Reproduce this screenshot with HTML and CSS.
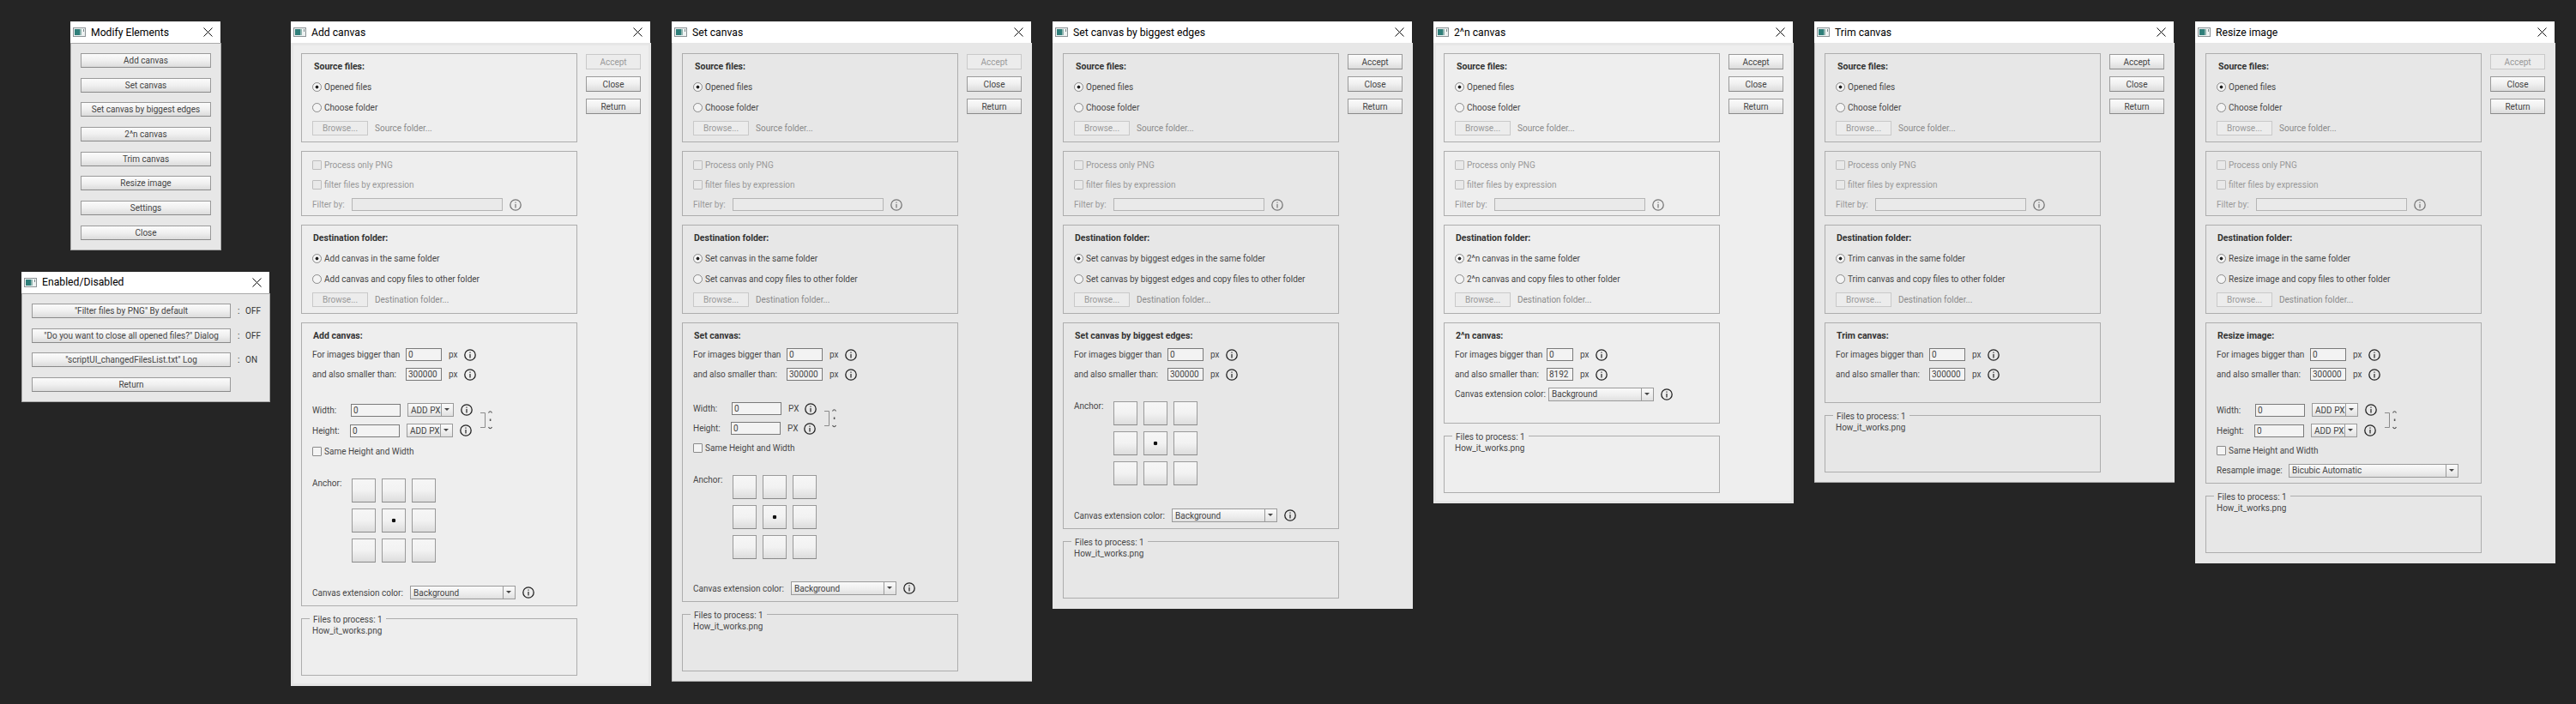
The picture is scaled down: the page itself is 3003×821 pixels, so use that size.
FILE: index.html
```html
<!DOCTYPE html>
<html lang="en">
<head>
    <meta charset="UTF-8">
    <title>Modify Elements</title>
    <link rel="stylesheet" href="styles.css">
</head>
<body>

    <svg class="defs" width="0" height="0">
        <symbol id="app" viewBox="0 0 15 11">
            <rect x="0.5" y="0.5" width="14" height="10" fill="#eef2f2" stroke="#8c9396"/>
            <rect x="2" y="2" width="6" height="7" fill="#2f7f7a"/>
            <rect x="8" y="2" width="2" height="7" fill="#8fb5b0"/>
            <rect x="12" y="2" width="1" height="3" fill="#7c8a8c"/>
        </symbol>
        <symbol id="x" viewBox="0 0 11 11">
            <path d="M0.5 0.5L10.5 10.5M10.5 0.5L0.5 10.5" stroke="#111" fill="none"/>
        </symbol>
        <symbol id="info" viewBox="0 0 14 14">
            <circle cx="7" cy="7" r="6.2" fill="none" stroke="currentColor" stroke-width="1.3"/>
            <path d="M7 3.4V4.8M7 6V10.4" stroke="currentColor" stroke-width="1.2"/>
        </symbol>
        <symbol id="link" viewBox="0 0 17 24">
            <path d="M0 3.5H5.5V20.5H0" fill="none" stroke="#8a8a8a"/>
            <path d="M9.5 3.5Q11.5 0 13.5 3.5M9.5 20Q11.5 23.5 13.5 20" fill="none" stroke="#555" stroke-width="1.2"/>
            <rect x="10.8" y="10.5" width="1.6" height="2.5" fill="#555"/>
        </symbol>
    </svg>

    <main class="desktop">

        <div class="stack">
            <section class="win win-menu edged">
                <header class="title"><svg class="app"><use href="#app"/></svg><span>Modify Elements</span><svg class="close"><use href="#x"/></svg></header>
                <div class="menu">
                    <button>Add canvas</button>
                    <button>Set canvas</button>
                    <button>Set canvas by biggest edges</button>
                    <button>2^n canvas</button>
                    <button>Trim canvas</button>
                    <button>Resize image</button>
                    <button>Settings</button>
                    <button>Close</button>
                </div>
            </section>

            <section class="win win-toggles edged">
                <header class="title"><svg class="app"><use href="#app"/></svg><span>Enabled/Disabled</span><svg class="close"><use href="#x"/></svg></header>
                <div class="toggles">
                    <button>"Filter files by PNG" By default</button><span class="state"><b>:</b>OFF</span>
                    <button>"Do you want to close all opened files?" Dialog</button><span class="state"><b>:</b>OFF</span>
                    <button>"scriptUI_changedFilesList.txt" Log</button><span class="state"><b>:</b>ON</span>
                    <button>Return</button>
                </div>
            </section>
        </div>

        <!-- Add canvas -->
        <section class="win light">
            <header class="title"><svg class="app"><use href="#app"/></svg><span>Add canvas</span><svg class="close"><use href="#x"/></svg></header>
            <div class="body">
                <div class="main">
                    <div class="panel">
                        <h3 class="source-head">Source files:</h3>
                        <label class="pick"><input type="radio" name="src1" checked>Opened files</label>
                        <label class="pick"><input type="radio" name="src1">Choose folder</label>
                        <div class="browse"><button disabled>Browse...</button><span>Source folder...</span></div>
                    </div>
                    <div class="panel filter">
                        <label class="row off"><input type="checkbox" disabled>Process only PNG</label>
                        <label class="row off"><input type="checkbox" disabled>filter files by expression</label>
                        <div class="row off"><span class="w-filter">Filter by:</span><input class="in-filter" type="text" disabled><svg class="info"><use href="#info"/></svg></div>
                    </div>
                    <div class="panel">
                        <h3>Destination folder:</h3>
                        <label class="pick"><input type="radio" name="dst1" checked>Add canvas in the same folder</label>
                        <label class="pick"><input type="radio" name="dst1">Add canvas and copy files to other folder</label>
                        <div class="browse"><button disabled>Browse...</button><span>Destination folder...</span></div>
                    </div>
                    <div class="panel opts">
                        <h3>Add canvas:</h3>
                        <div class="row"><span class="w-size">For images bigger than</span><input class="in-size" type="text" value="0"><span class="px">px</span><svg class="info"><use href="#info"/></svg></div>
                        <div class="row"><span class="w-size">and also smaller than:</span><input class="in-size" type="text" value="300000"><span class="px">px</span><svg class="info"><use href="#info"/></svg></div>
                        <div class="dims tall">
                            <div>
                                <div class="row"><span class="w-width">Width:</span><input class="in-dim" type="text" value="0"><div class="select sel-unit"><span>ADD PX</span><i></i></div><svg class="info"><use href="#info"/></svg></div>
                                <div class="row"><span class="w-height">Height:</span><input class="in-dim" type="text" value="0"><div class="select sel-unit"><span>ADD PX</span><i></i></div><svg class="info"><use href="#info"/></svg></div>
                            </div>
                            <svg class="link"><use href="#link"/></svg>
                        </div>
                        <label class="row tall"><input type="checkbox">Same Height and Width</label>
                        <div class="anchor">
                            <span>Anchor:</span>
                            <div class="anchor-grid"><button></button><button></button><button></button><button></button><button class="dot"></button><button></button><button></button><button></button><button></button></div>
                        </div>
                        <div class="row tall color"><span class="w-color">Canvas extension color:</span><div class="select sel-color"><span>Background</span><i></i></div><svg class="info"><use href="#info"/></svg></div>
                    </div>
                    <fieldset class="files"><legend>Files to process: 1</legend><p>How_it_works.png</p></fieldset>
                </div>
                <div class="actions"><button disabled>Accept</button><button>Close</button><button>Return</button></div>
            </div>
        </section>

        <!-- Set canvas -->
        <section class="win edged">
            <header class="title"><svg class="app"><use href="#app"/></svg><span>Set canvas</span><svg class="close"><use href="#x"/></svg></header>
            <div class="body">
                <div class="main">
                    <div class="panel">
                        <h3 class="source-head">Source files:</h3>
                        <label class="pick"><input type="radio" name="src2" checked>Opened files</label>
                        <label class="pick"><input type="radio" name="src2">Choose folder</label>
                        <div class="browse"><button disabled>Browse...</button><span>Source folder...</span></div>
                    </div>
                    <div class="panel filter">
                        <label class="row off"><input type="checkbox" disabled>Process only PNG</label>
                        <label class="row off"><input type="checkbox" disabled>filter files by expression</label>
                        <div class="row off"><span class="w-filter">Filter by:</span><input class="in-filter" type="text" disabled><svg class="info"><use href="#info"/></svg></div>
                    </div>
                    <div class="panel">
                        <h3>Destination folder:</h3>
                        <label class="pick"><input type="radio" name="dst2" checked>Set canvas in the same folder</label>
                        <label class="pick"><input type="radio" name="dst2">Set canvas and copy files to other folder</label>
                        <div class="browse"><button disabled>Browse...</button><span>Destination folder...</span></div>
                    </div>
                    <div class="panel opts opts-set">
                        <h3>Set canvas:</h3>
                        <div class="row"><span class="w-size">For images bigger than</span><input class="in-size" type="text" value="0"><span class="px">px</span><svg class="info"><use href="#info"/></svg></div>
                        <div class="row"><span class="w-size">and also smaller than:</span><input class="in-size" type="text" value="300000"><span class="px">px</span><svg class="info"><use href="#info"/></svg></div>
                        <div class="dims">
                            <div>
                                <div class="row"><span class="w-width">Width:</span><input class="in-dim" type="text" value="0"><span class="px px-upper">PX</span><svg class="info"><use href="#info"/></svg></div>
                                <div class="row"><span class="w-height">Height:</span><input class="in-dim" type="text" value="0"><span class="px px-upper">PX</span><svg class="info"><use href="#info"/></svg></div>
                            </div>
                            <svg class="link"><use href="#link"/></svg>
                        </div>
                        <label class="row"><input type="checkbox">Same Height and Width</label>
                        <div class="anchor">
                            <span>Anchor:</span>
                            <div class="anchor-grid"><button></button><button></button><button></button><button></button><button class="dot"></button><button></button><button></button><button></button><button></button></div>
                        </div>
                        <div class="row tall color"><span class="w-color">Canvas extension color:</span><div class="select sel-color"><span>Background</span><i></i></div><svg class="info"><use href="#info"/></svg></div>
                    </div>
                    <fieldset class="files"><legend>Files to process: 1</legend><p>How_it_works.png</p></fieldset>
                </div>
                <div class="actions"><button disabled>Accept</button><button>Close</button><button>Return</button></div>
            </div>
        </section>

        <!-- Set canvas by biggest edges -->
        <section class="win">
            <header class="title"><svg class="app"><use href="#app"/></svg><span>Set canvas by biggest edges</span><svg class="close"><use href="#x"/></svg></header>
            <div class="body">
                <div class="main">
                    <div class="panel">
                        <h3 class="source-head">Source files:</h3>
                        <label class="pick"><input type="radio" name="src3" checked>Opened files</label>
                        <label class="pick"><input type="radio" name="src3">Choose folder</label>
                        <div class="browse"><button disabled>Browse...</button><span>Source folder...</span></div>
                    </div>
                    <div class="panel filter">
                        <label class="row off"><input type="checkbox" disabled>Process only PNG</label>
                        <label class="row off"><input type="checkbox" disabled>filter files by expression</label>
                        <div class="row off"><span class="w-filter">Filter by:</span><input class="in-filter" type="text" disabled><svg class="info"><use href="#info"/></svg></div>
                    </div>
                    <div class="panel">
                        <h3>Destination folder:</h3>
                        <label class="pick"><input type="radio" name="dst3" checked>Set canvas by biggest edges in the same folder</label>
                        <label class="pick"><input type="radio" name="dst3">Set canvas by biggest edges and copy files to other folder</label>
                        <div class="browse"><button disabled>Browse...</button><span>Destination folder...</span></div>
                    </div>
                    <div class="panel opts">
                        <h3>Set canvas by biggest edges:</h3>
                        <div class="row"><span class="w-size">For images bigger than</span><input class="in-size" type="text" value="0"><span class="px">px</span><svg class="info"><use href="#info"/></svg></div>
                        <div class="row"><span class="w-size">and also smaller than:</span><input class="in-size" type="text" value="300000"><span class="px">px</span><svg class="info"><use href="#info"/></svg></div>
                        <div class="anchor">
                            <span>Anchor:</span>
                            <div class="anchor-grid"><button></button><button></button><button></button><button></button><button class="dot"></button><button></button><button></button><button></button><button></button></div>
                        </div>
                        <div class="row tall color"><span class="w-color">Canvas extension color:</span><div class="select sel-color"><span>Background</span><i></i></div><svg class="info"><use href="#info"/></svg></div>
                    </div>
                    <fieldset class="files"><legend>Files to process: 1</legend><p>How_it_works.png</p></fieldset>
                </div>
                <div class="actions"><button>Accept</button><button>Close</button><button>Return</button></div>
            </div>
        </section>

        <!-- 2^n canvas -->
        <section class="win light">
            <header class="title"><svg class="app"><use href="#app"/></svg><span>2^n canvas</span><svg class="close"><use href="#x"/></svg></header>
            <div class="body">
                <div class="main">
                    <div class="panel">
                        <h3 class="source-head">Source files:</h3>
                        <label class="pick"><input type="radio" name="src4" checked>Opened files</label>
                        <label class="pick"><input type="radio" name="src4">Choose folder</label>
                        <div class="browse"><button disabled>Browse...</button><span>Source folder...</span></div>
                    </div>
                    <div class="panel filter">
                        <label class="row off"><input type="checkbox" disabled>Process only PNG</label>
                        <label class="row off"><input type="checkbox" disabled>filter files by expression</label>
                        <div class="row off"><span class="w-filter">Filter by:</span><input class="in-filter" type="text" disabled><svg class="info"><use href="#info"/></svg></div>
                    </div>
                    <div class="panel">
                        <h3>Destination folder:</h3>
                        <label class="pick"><input type="radio" name="dst4" checked>2^n canvas in the same folder</label>
                        <label class="pick"><input type="radio" name="dst4">2^n canvas and copy files to other folder</label>
                        <div class="browse"><button disabled>Browse...</button><span>Destination folder...</span></div>
                    </div>
                    <div class="panel opts opts-pow">
                        <h3>2^n canvas:</h3>
                        <div class="row"><span class="w-pow">For images bigger than</span><input class="in-pow" type="text" value="0"><span class="px">px</span><svg class="info"><use href="#info"/></svg></div>
                        <div class="row"><span class="w-pow">and also smaller than:</span><input class="in-pow" type="text" value="8192"><span class="px">px</span><svg class="info"><use href="#info"/></svg></div>
                        <div class="row"><span class="w-color w-color-pow">Canvas extension color:</span><div class="select sel-color"><span>Background</span><i></i></div><svg class="info"><use href="#info"/></svg></div>
                    </div>
                    <fieldset class="files"><legend>Files to process: 1</legend><p>How_it_works.png</p></fieldset>
                </div>
                <div class="actions"><button>Accept</button><button>Close</button><button>Return</button></div>
            </div>
        </section>

        <!-- Trim canvas -->
        <section class="win edged">
            <header class="title"><svg class="app"><use href="#app"/></svg><span>Trim canvas</span><svg class="close"><use href="#x"/></svg></header>
            <div class="body">
                <div class="main">
                    <div class="panel">
                        <h3 class="source-head">Source files:</h3>
                        <label class="pick"><input type="radio" name="src5" checked>Opened files</label>
                        <label class="pick"><input type="radio" name="src5">Choose folder</label>
                        <div class="browse"><button disabled>Browse...</button><span>Source folder...</span></div>
                    </div>
                    <div class="panel filter">
                        <label class="row off"><input type="checkbox" disabled>Process only PNG</label>
                        <label class="row off"><input type="checkbox" disabled>filter files by expression</label>
                        <div class="row off"><span class="w-filter">Filter by:</span><input class="in-filter" type="text" disabled><svg class="info"><use href="#info"/></svg></div>
                    </div>
                    <div class="panel">
                        <h3>Destination folder:</h3>
                        <label class="pick"><input type="radio" name="dst5" checked>Trim canvas in the same folder</label>
                        <label class="pick"><input type="radio" name="dst5">Trim canvas and copy files to other folder</label>
                        <div class="browse"><button disabled>Browse...</button><span>Destination folder...</span></div>
                    </div>
                    <div class="panel opts opts-trim">
                        <h3>Trim canvas:</h3>
                        <div class="row"><span class="w-size">For images bigger than</span><input class="in-size" type="text" value="0"><span class="px">px</span><svg class="info"><use href="#info"/></svg></div>
                        <div class="row"><span class="w-size">and also smaller than:</span><input class="in-size" type="text" value="300000"><span class="px">px</span><svg class="info"><use href="#info"/></svg></div>
                    </div>
                    <fieldset class="files"><legend>Files to process: 1</legend><p>How_it_works.png</p></fieldset>
                </div>
                <div class="actions"><button>Accept</button><button>Close</button><button>Return</button></div>
            </div>
        </section>

        <!-- Resize image -->
        <section class="win">
            <header class="title"><svg class="app"><use href="#app"/></svg><span>Resize image</span><svg class="close"><use href="#x"/></svg></header>
            <div class="body">
                <div class="main">
                    <div class="panel">
                        <h3 class="source-head">Source files:</h3>
                        <label class="pick"><input type="radio" name="src6" checked>Opened files</label>
                        <label class="pick"><input type="radio" name="src6">Choose folder</label>
                        <div class="browse"><button disabled>Browse...</button><span>Source folder...</span></div>
                    </div>
                    <div class="panel filter">
                        <label class="row off"><input type="checkbox" disabled>Process only PNG</label>
                        <label class="row off"><input type="checkbox" disabled>filter files by expression</label>
                        <div class="row off"><span class="w-filter">Filter by:</span><input class="in-filter" type="text" disabled><svg class="info"><use href="#info"/></svg></div>
                    </div>
                    <div class="panel">
                        <h3>Destination folder:</h3>
                        <label class="pick"><input type="radio" name="dst6" checked>Resize image in the same folder</label>
                        <label class="pick"><input type="radio" name="dst6">Resize image and copy files to other folder</label>
                        <div class="browse"><button disabled>Browse...</button><span>Destination folder...</span></div>
                    </div>
                    <div class="panel opts">
                        <h3>Resize image:</h3>
                        <div class="row"><span class="w-size">For images bigger than</span><input class="in-size" type="text" value="0"><span class="px">px</span><svg class="info"><use href="#info"/></svg></div>
                        <div class="row"><span class="w-size">and also smaller than:</span><input class="in-size" type="text" value="300000"><span class="px">px</span><svg class="info"><use href="#info"/></svg></div>
                        <div class="dims tall">
                            <div>
                                <div class="row"><span class="w-width">Width:</span><input class="in-dim" type="text" value="0"><div class="select sel-unit"><span>ADD PX</span><i></i></div><svg class="info"><use href="#info"/></svg></div>
                                <div class="row"><span class="w-height">Height:</span><input class="in-dim" type="text" value="0"><div class="select sel-unit"><span>ADD PX</span><i></i></div><svg class="info"><use href="#info"/></svg></div>
                            </div>
                            <svg class="link"><use href="#link"/></svg>
                        </div>
                        <label class="row"><input type="checkbox">Same Height and Width</label>
                        <div class="row"><span class="w-resample">Resample image:</span><div class="select sel-resample"><span>Bicubic Automatic</span><i></i></div></div>
                    </div>
                    <fieldset class="files"><legend>Files to process: 1</legend><p>How_it_works.png</p></fieldset>
                </div>
                <div class="actions"><button disabled>Accept</button><button>Close</button><button>Return</button></div>
            </div>
        </section>

    </main>

</body>
</html>
```

FILE: styles.css
```css
* {
    box-sizing: border-box;
}

body {
    margin: 0;
    background-color: #252525;
    font-family: Roboto, "Liberation Sans", sans-serif;
    font-size: 10px;
    color: #474747;
    overflow: hidden;
    white-space: nowrap;
}

.defs {
    position: absolute;
}

.desktop {
    display: flex;
    align-items: flex-start;
    gap: 24px;
    padding: 25px 0 0 25px;
}

.stack {
    display: flex;
    flex-direction: column;
    gap: 25px;
    width: 290px;
}

/* windows */

.win {
    width: 420px;
}

.win-menu {
    width: 176px;
    margin-left: 57px;
}

.win-toggles {
    width: 290px;
}

.title {
    display: flex;
    align-items: center;
    height: 25px;
    margin-right: 1px;
    padding: 0 9px 0 3px;
    background-color: #fff;
    font-size: 12.2px;
    color: #000;
}

.app {
    width: 15px;
    height: 11px;
    margin-right: 6px;
}

.close {
    width: 11px;
    height: 11px;
    margin-left: auto;
}

.body {
    display: flex;
    gap: 10px;
    padding: 12px;
    background-color: #e7e7e7;
}

.light .body {
    background-color: #eeeeee;
    box-shadow: inset 0 0 0 3px #e6e6e6;
}

.edged .menu,
.edged .toggles {
    box-shadow: inset 0 0 0 1px #a9a9a9;
}

.edged .body {
    box-shadow: inset 0 -1px 0 #a9a9a9, inset 1px 0 0 #c4c4c4;
}

.menu {
    display: flex;
    flex-direction: column;
    gap: 11.7px;
    padding: 12px;
    background-color: #e7e7e7;
}

.toggles {
    display: grid;
    grid-template-columns: 232px 1fr;
    row-gap: 11.7px;
    column-gap: 8px;
    padding: 12px;
    background-color: #e7e7e7;
}

.state {
    display: flex;
    align-items: center;
    color: #333;
}

.state b {
    width: 9px;
    font-weight: normal;
}

/* buttons */

button {
    height: 17px;
    padding: 0;
    border: 1px solid #9a9a9a;
    border-bottom-color: #8a8a8a;
    background: linear-gradient(#fbfbfb, #f0f0f0 50%, #dcdcdc);
    font: inherit;
    color: #444;
}

button:disabled {
    border-color: #c9c9c9;
    background: #ececec;
    color: #9a9a9a;
}

.main {
    display: flex;
    flex-direction: column;
    gap: 10px;
    width: 322px;
}

.actions {
    display: flex;
    flex-direction: column;
    gap: 8px;
    width: 64px;
    margin-top: 1px;
}

.actions button {
    height: 18px;
}

/* panels */

.panel {
    padding: 7px 12px;
    border: 1px solid #adadad;
}

.panel h3 {
    height: 16px;
    margin: 0 0 3px;
    padding-left: 1px;
    font-size: 10.5px;
    line-height: 16px;
    font-weight: bold;
    color: #333;
}

.panel .source-head {
    margin-left: 1px;
}

.pick {
    display: flex;
    align-items: center;
    height: 24px;
}

.browse {
    display: flex;
    align-items: center;
    margin-top: 4px;
    color: #8a8a8a;
}

.browse button {
    width: 65px;
    margin-right: 8px;
}

.filter {
    padding: 4px 12px 1px;
}

.row {
    display: flex;
    align-items: center;
    height: 23px;
}

.off {
    color: #999;
}

.opts {
    padding-bottom: 3px;
}

.opts h3 {
    margin-bottom: 2px;
}

.opts-pow {
    padding-bottom: 22px;
}

.opts-trim {
    padding-bottom: 21px;
}

.tall {
    height: 24px;
}

.tall .row {
    height: 24px;
}

.dims {
    display: flex;
    align-items: center;
    height: auto;
    margin-top: 18px;
}

.opts-set .dims {
    margin-top: 17px;
}

.link {
    width: 17px;
    height: 24px;
    margin-left: 9px;
}

/* radios and checkboxes */

input[type="radio"],
input[type="checkbox"] {
    appearance: none;
    flex: none;
    width: 11px;
    height: 11px;
    margin: 0 3px 0 0;
    border: 1px solid #8a8a8a;
    background-color: #f4f4f4;
}

input[type="radio"] {
    border-radius: 50%;
}

input[type="radio"]:checked {
    background: radial-gradient(circle, #222 0, #222 1.7px, #f4f4f4 2.2px);
}

input[type="checkbox"] {
    border-radius: 1px;
}

input[type="checkbox"]:disabled {
    border-color: #bdbdbd;
    background-color: #e9e9e9;
}

/* fields */

input[type="text"] {
    flex: none;
    height: 15px;
    padding: 0 2px;
    border: 1px solid #7a7a7a;
    border-radius: 0;
    background-color: #f3f3f3;
    font: inherit;
    line-height: 13px;
    color: #444;
}

input[type="text"]:disabled {
    border-color: #b5b5b5;
    background-color: #eaeaea;
}

.in-filter {
    width: 176px;
}

.in-size {
    width: 42px;
}

.in-pow {
    width: 31px;
}

.in-dim {
    width: 58px;
}

.w-filter {
    width: 46px;
}

.w-size {
    width: 109px;
}

.w-pow {
    width: 107px;
}

.w-width {
    width: 45px;
}

.w-height {
    width: 44px;
}

.w-color {
    width: 114px;
}

.w-color-pow {
    width: 109px;
}

.w-resample {
    width: 84px;
}

.px {
    width: 18px;
    margin-left: 8px;
}

.px-upper {
    width: 19px;
}

.info {
    flex: none;
    width: 14px;
    height: 14px;
    color: #222;
}

.off .info {
    margin-left: 8px;
    color: #777;
}

.select {
    flex: none;
    display: flex;
    align-items: center;
    height: 16px;
    margin-right: 8px;
    padding-left: 3px;
    border: 1px solid #9a9a9a;
    background: linear-gradient(#fafafa, #ededed 60%, #e0e0e0);
    color: #444;
}

.select span {
    flex: 1;
}

.select i {
    position: relative;
    width: 14px;
    height: 100%;
    border-left: 1px solid #9a9a9a;
}

.select i::after {
    content: "";
    position: absolute;
    left: 3px;
    top: 5px;
    border: 3px solid transparent;
    border-top: 3px solid #444;
}

.in-dim + .select {
    margin-left: 8px;
}

.sel-unit {
    width: 54px;
}

.sel-color {
    width: 123px;
}

.sel-resample {
    width: 198px;
}

/* anchor */

.anchor {
    display: flex;
    margin-top: 20px;
}

.anchor > span {
    width: 46px;
    line-height: 11px;
}

.anchor-grid {
    display: grid;
    grid-template-columns: repeat(3, 28px);
    grid-auto-rows: 28px;
    gap: 7px;
}

.anchor-grid button {
    height: 28px;
    background: linear-gradient(#f6f6f6, #f2f2f2 50%, #dddddd);
}

.anchor-grid .dot {
    background: radial-gradient(circle, #111 0, #111 2px, transparent 2.6px), linear-gradient(#f6f6f6, #f2f2f2 50%, #dddddd);
}

.color {
    margin-top: 23px;
}

.opts-set .color {
    margin-top: 22px;
}

/* files */

.files {
    height: 76px;
    margin: -5px 0 0;
    padding: 0;
    border: 1px solid #adadad;
    min-width: 0;
}

.files legend {
    margin-left: 9px;
    padding: 4px 4px 0;
    line-height: 14px;
}

.files p {
    margin: 0;
    padding-left: 12px;
    line-height: 12px;
}
```
